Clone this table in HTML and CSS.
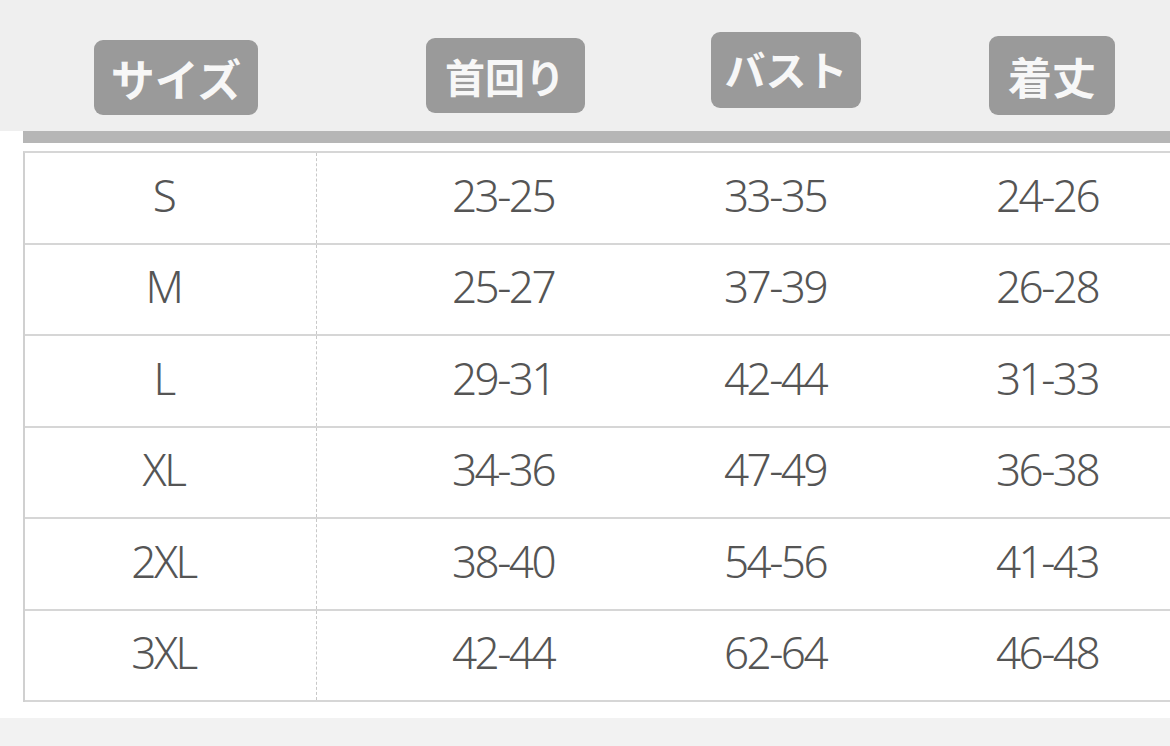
FILE: index.html
```html
<!DOCTYPE html>
<html lang="ja">
<head>
<meta charset="utf-8">
<title>サイズ表</title>
<link rel="stylesheet" href="styles.css">
</head>
<body>
<header class="head">
  <div class="hcell hc1"><span class="tag t-size">サイズ</span></div>
  <div class="hcell hc2"><span class="tag t-neck">首回り</span></div>
  <div class="hcell hc3"><span class="tag t-bust">バスト</span></div>
  <div class="hcell hc4"><span class="tag t-len">着丈</span></div>
</header>
<main class="sheet">
  <div class="bar"></div>
  <div class="table">
    <div class="row"><div class="c c1">S</div><div class="c">23-25</div><div class="c">33-35</div><div class="c">24-26</div><div class="c fill"></div></div>
    <div class="row"><div class="c c1">M</div><div class="c">25-27</div><div class="c">37-39</div><div class="c">26-28</div><div class="c fill"></div></div>
    <div class="row"><div class="c c1">L</div><div class="c">29-31</div><div class="c">42-44</div><div class="c">31-33</div><div class="c fill"></div></div>
    <div class="row"><div class="c c1">XL</div><div class="c">34-36</div><div class="c">47-49</div><div class="c">36-38</div><div class="c fill"></div></div>
    <div class="row"><div class="c c1">2XL</div><div class="c">38-40</div><div class="c">54-56</div><div class="c">41-43</div><div class="c fill"></div></div>
    <div class="row"><div class="c c1">3XL</div><div class="c">42-44</div><div class="c">62-64</div><div class="c">46-48</div><div class="c fill"></div></div>
  </div>
</main>
<footer class="foot"></footer>
</body>
</html>
```

FILE: styles.css
```css
html, body {
  margin: 0;
  padding: 0;
  background: #ffffff;
  overflow: hidden;
  width: 1170px;
  height: 746px;
}

body {
  font-family: "Noto Sans", "Noto Sans CJK JP", sans-serif;
}

.head {
  height: 131px;
  background: #efefef;
  display: grid;
  grid-template-columns: 23px 294px 272px 272px 272px 1fr;
  align-items: start;
}

.hcell {
  display: flex;
  justify-content: center;
}

.hc1 { grid-column: 2; }
.hc2 { grid-column: 3; padding-left: 100px; }
.hc3 { grid-column: 4; padding-left: 100px; }
.hc4 { grid-column: 5; padding-left: 100px; }

.tag {
  display: flex;
  align-items: center;
  justify-content: center;
  background: #9a9a9a;
  color: #f7f7f7;
  border-radius: 9px;
  font-family: "Noto Sans CJK JP", sans-serif;
  font-weight: 700;
  font-size: 40px;
  line-height: 1;
  height: 75px;
  box-sizing: border-box;
}

.t-size { width: 164px; margin-top: 40px; margin-left: 12px; font-size: 44px; }
.t-neck { width: 159px; margin-top: 38px; margin-left: 4px; font-size: 40px; }
.t-bust { width: 165px; margin-top: 32px; margin-left: 22px; height: 76px; font-size: 41px; padding-bottom: 4px; }
.t-len  { width: 126px; margin-top: 36px; margin-left: 10px; height: 79px; font-size: 44px; }

.sheet {
  padding-left: 23px;
}

.bar {
  height: 12px;
  background: #b6b6b6;
  margin-bottom: 8px;
}

.table {
  width: 1180px;
  border-top: 2px solid #d6d6d6;
  border-left: 2px solid #d0d0d0;
  box-sizing: border-box;
}

.row {
  display: grid;
  grid-template-columns: 292px 272px 272px 272px 1fr;
  height: 91.5px;
  box-sizing: border-box;
  border-bottom: 2px solid #d6d6d6;
}

.c {
  display: flex;
  align-items: center;
  justify-content: center;
  padding-left: 100px;
  color: #555555;
  font-family: "Noto Sans", sans-serif;
  font-weight: 350;
  font-size: 44px;
  letter-spacing: -2.5px;
  padding-bottom: 6px;
}

.c1 {
  padding-left: 0;
  padding-right: 14px;
  border-right: 1px dashed #c8c8c8;
}

.fill {
  padding-left: 0;
}

.foot {
  margin-top: 16px;
  height: 28px;
  background: #f2f2f2;
}
```
